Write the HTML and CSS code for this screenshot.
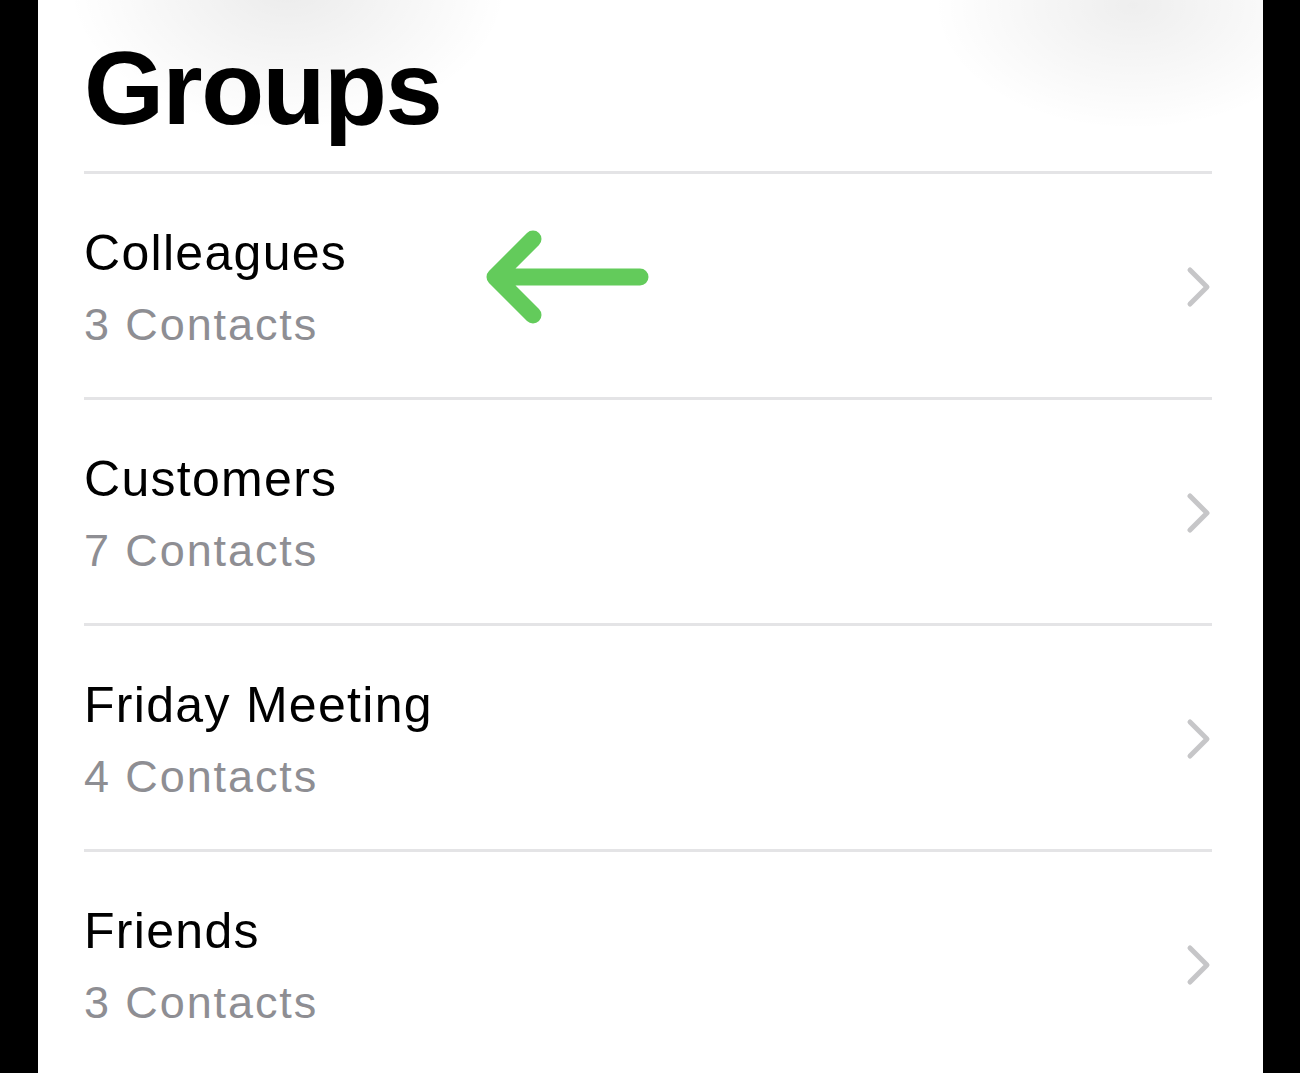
FILE: index.html
```html
<!DOCTYPE html>
<html lang="en">
<head>
    <meta charset="UTF-8">
    <meta name="viewport" content="width=device-width, initial-scale=1.0">
    <title>Groups</title>
    <link rel="stylesheet" href="styles.css">
</head>
<body>
    <div class="screen">
        <div class="glow glow-left"></div>
        <div class="glow glow-right"></div>

        <h1 class="title">Groups</h1>

        <ul class="groups">
            <li class="group">
                <div class="group-text">
                    <div class="group-name">Colleagues</div>
                    <div class="group-count">3 Contacts</div>
                </div>
                <svg class="chevron" width="26" height="42" viewBox="0 0 26 42">
                    <polyline points="4,4 21,21 4,38" />
                </svg>
            </li>
            <li class="group">
                <div class="group-text">
                    <div class="group-name">Customers</div>
                    <div class="group-count">7 Contacts</div>
                </div>
                <svg class="chevron" width="26" height="42" viewBox="0 0 26 42">
                    <polyline points="4,4 21,21 4,38" />
                </svg>
            </li>
            <li class="group">
                <div class="group-text">
                    <div class="group-name">Friday Meeting</div>
                    <div class="group-count">4 Contacts</div>
                </div>
                <svg class="chevron" width="26" height="42" viewBox="0 0 26 42">
                    <polyline points="4,4 21,21 4,38" />
                </svg>
            </li>
            <li class="group">
                <div class="group-text">
                    <div class="group-name">Friends</div>
                    <div class="group-count">3 Contacts</div>
                </div>
                <svg class="chevron" width="26" height="42" viewBox="0 0 26 42">
                    <polyline points="4,4 21,21 4,38" />
                </svg>
            </li>
        </ul>

        <!-- annotation arrow over the first row -->
        <svg class="pointer" width="200" height="120" viewBox="0 0 200 120">
            <path d="M170 57 H25 M63 19 L25 57 L63 95" />
        </svg>
    </div>
</body>
</html>
```

FILE: styles.css
```css
* {
    margin: 0;
    padding: 0;
    box-sizing: border-box;
}

body {
    background: #000;
    font-family: "Liberation Sans", Arial, sans-serif;
    color: #000;
}

.screen {
    position: relative;
    margin: 0 37px 0 38px;
    min-height: 100vh;
    background: #fff;
    padding: 37px 51px 0 46px;
    overflow: hidden;
}

.glow {
    position: absolute;
    pointer-events: none;
}
.glow-left {
    left: 30px;
    top: -160px;
    width: 440px;
    height: 290px;
    background: radial-gradient(closest-side, rgba(0, 0, 0, .08), rgba(0, 0, 0, 0));
}
.glow-right {
    right: -70px;
    top: -120px;
    width: 400px;
    height: 250px;
    background: radial-gradient(closest-side, rgba(0, 0, 0, .065), rgba(0, 0, 0, 0));
}

.title {
    position: relative;
    font-size: 103px;
    line-height: 1;
    font-weight: 700;
    letter-spacing: -1.5px;
    margin-bottom: 31px;
}

.groups {
    list-style: none;
    position: relative;
}

.group {
    display: flex;
    align-items: center;
    justify-content: space-between;
    height: 226px;
    border-top: 3px solid #e4e4e6;
    padding-top: 3px;
}

.group-name {
    font-size: 50px;
    line-height: 1;
    letter-spacing: 1.3px;
}

.group-count {
    font-size: 45px;
    line-height: 1;
    letter-spacing: 1.9px;
    color: #8e8e93;
    margin-top: 24px;
}

.chevron {
    fill: none;
    stroke: #c6c6c8;
    stroke-width: 5;
    stroke-linecap: round;
    stroke-linejoin: round;
}

.pointer {
    position: absolute;
    left: 432px;
    top: 220px;
    fill: none;
    stroke: #63cb5b;
    stroke-width: 17;
    stroke-linecap: round;
    stroke-linejoin: round;
}
```
